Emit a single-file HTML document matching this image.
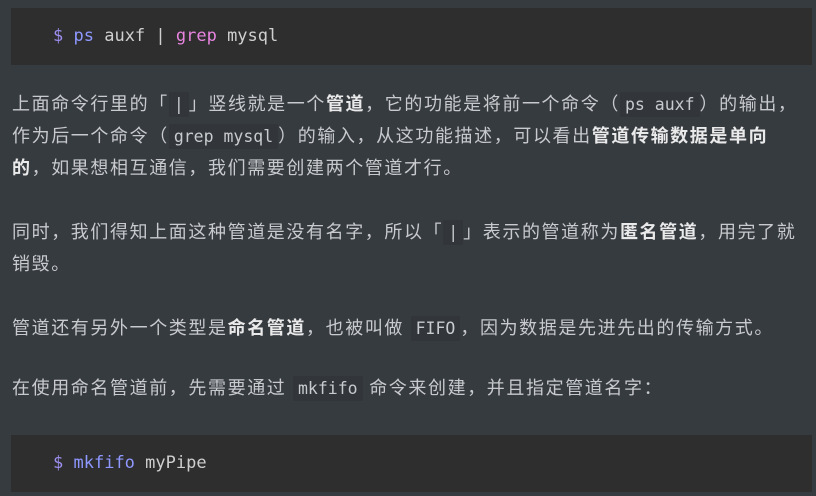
<!DOCTYPE html>
<html><head><meta charset="utf-8"><style>
body{margin:0;width:816px;height:496px;background:#363b40;overflow:hidden;font-family:"Liberation Sans","Noto Sans CJK SC",sans-serif;font-size:18px;letter-spacing:1.6px;color:#c8cacd}
.pre{position:absolute;left:11px;width:801px;height:57px;background:#2e2e2e;font-family:"DejaVu Sans Mono","Liberation Mono",monospace;font-size:17px;letter-spacing:0;line-height:57px;color:#cfcfcf}
.pre span.in{position:absolute;left:42px;top:0}
.l{position:absolute;left:12px;white-space:nowrap;line-height:32px}
b{color:#eaeaea;font-weight:bold}
code{font-family:"DejaVu Sans Mono","Liberation Mono",monospace;font-size:16.5px;letter-spacing:0;background:#32363b;padding:3px 5px;color:#c8cacd}
.d{color:#9c8ff0}.p{color:#8e98ff}.g{color:#e784e0}
</style></head><body>
<div class="pre" style="top:8px"><span class="in"><span class="d">$</span> <span class="p">ps</span> auxf | <span class="g">grep</span> mysql</span></div>
<div class="l" style="top:88px">上面命令行里的「<code>|</code>」竖线就是一个<b>管道</b>，它的功能是将前一个命令（<code>ps auxf</code>）的输出，</div>
<div class="l" style="top:120px">作为后一个命令（<code>grep mysql</code>）的输入，从这功能描述，可以看出<b>管道传输数据是单向</b></div>
<div class="l" style="top:152px"><b>的</b>，如果想相互通信，我们需要创建两个管道才行。</div>
<div class="l" style="top:216px">同时，我们得知上面这种管道是没有名字，所以「<code>|</code>」表示的管道称为<b>匿名管道</b>，用完了就</div>
<div class="l" style="top:248px">销毁。</div>
<div class="l" style="top:312px">管道还有另外一个类型是<b>命名管道</b>，也被叫做 <code>FIFO</code>，因为数据是先进先出的传输方式。</div>
<div class="l" style="top:372px">在使用命名管道前，先需要通过 <code>mkfifo</code> 命令来创建，并且指定管道名字：</div>
<div class="pre" style="top:435px"><span class="in"><span class="d">$</span> <span class="p">mkfifo</span> myPipe</span></div>
</body></html>
